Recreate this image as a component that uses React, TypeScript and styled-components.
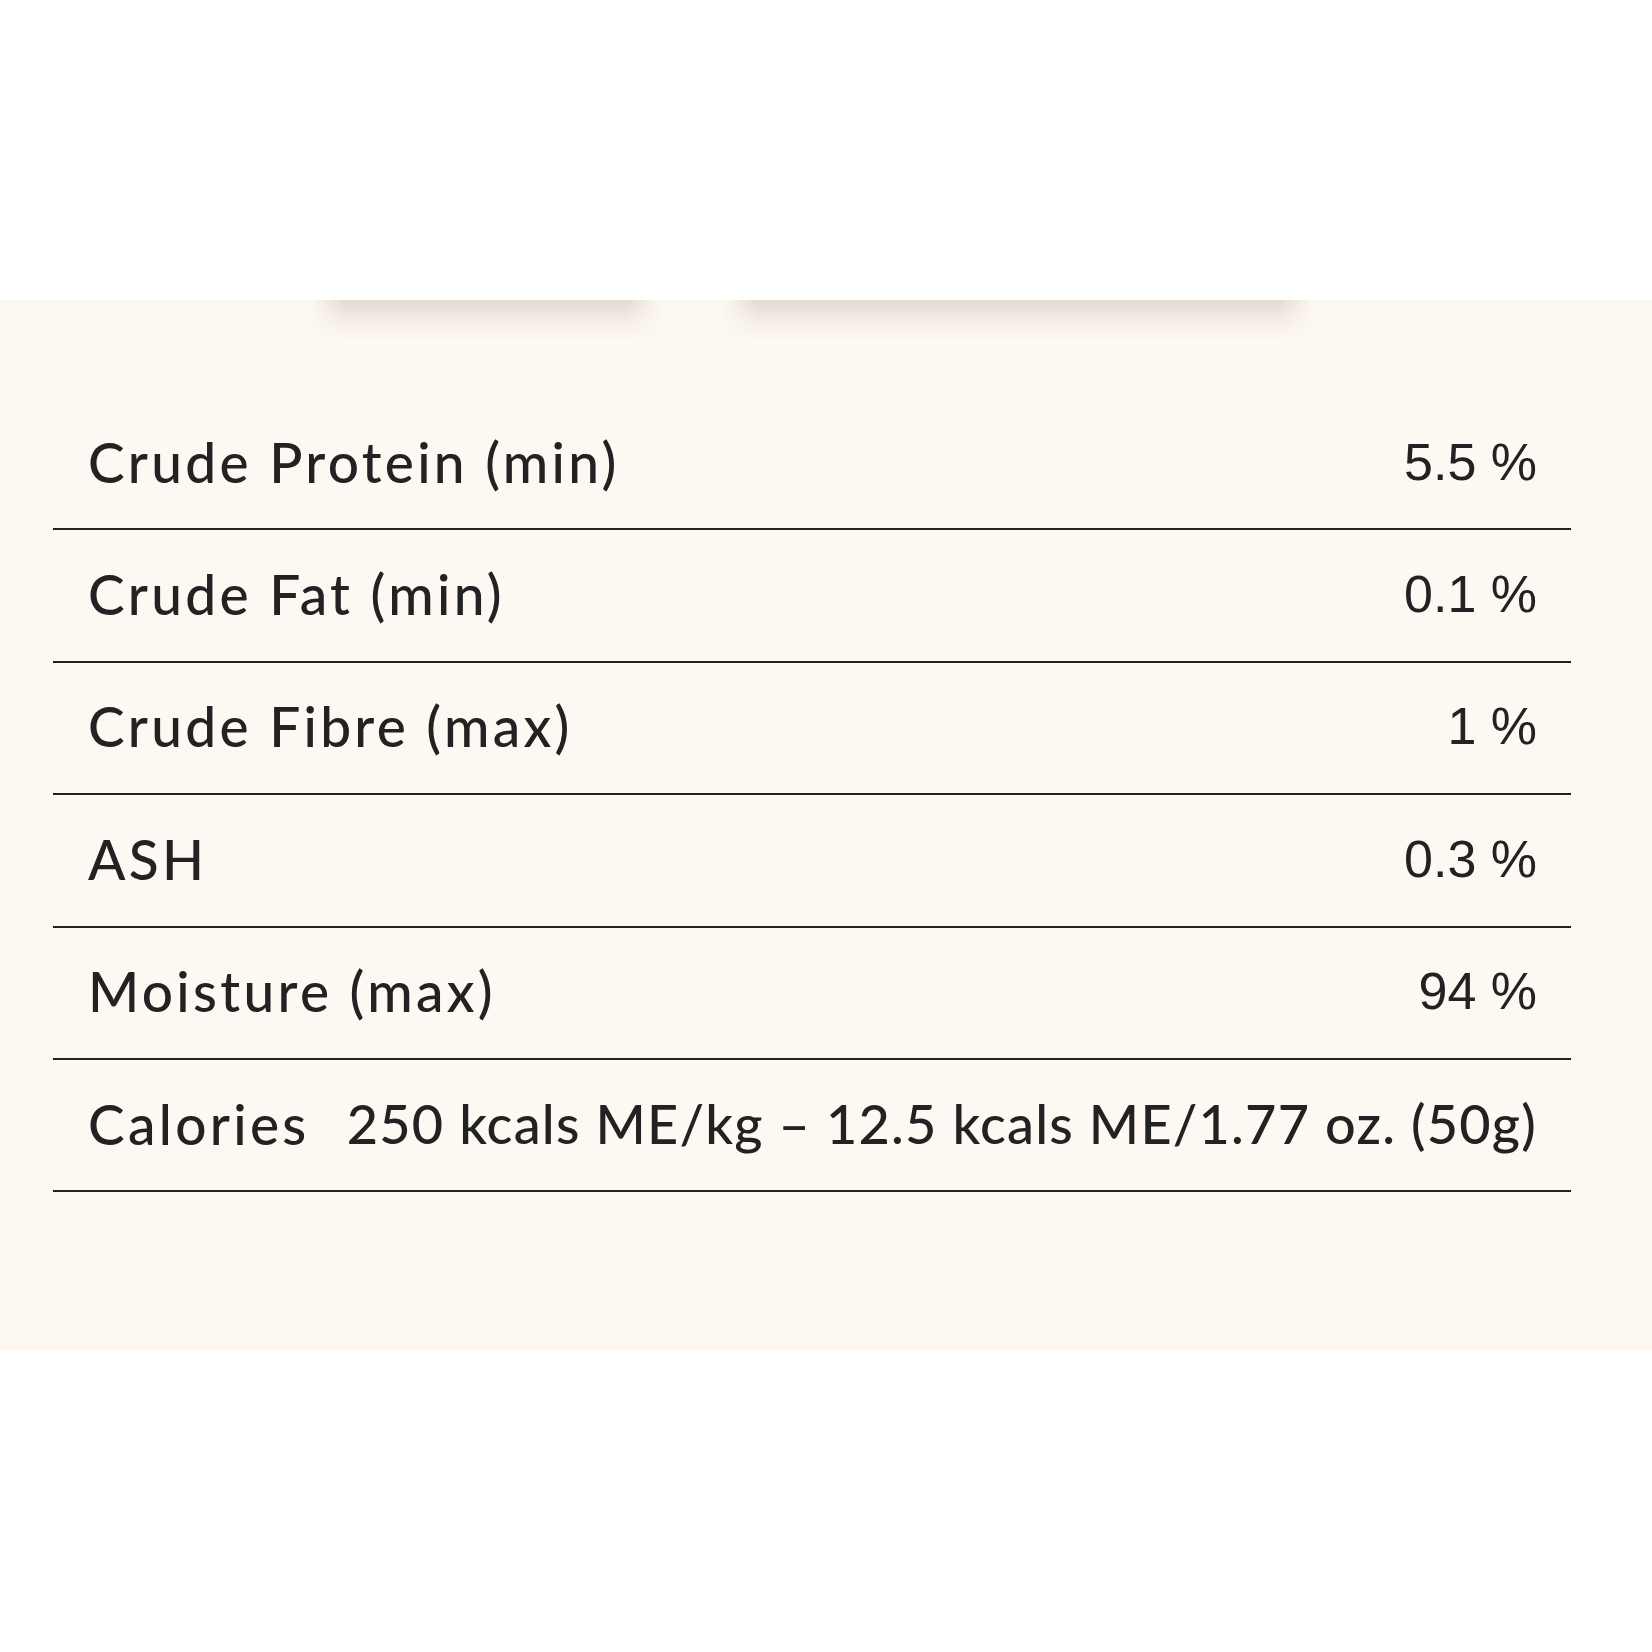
import React from "react";
import styled, { createGlobalStyle } from "styled-components";

const Global = createGlobalStyle`
  html, body { margin: 0; padding: 0; background: #ffffff; }
  body { font-family: "Lato", "Liberation Sans", sans-serif; color: #222222; }
`;

const Page = styled.div`
  width: 1652px;
  min-height: 1652px;
  background: #ffffff;
`;

const Header = styled.header`
  height: 300px;
  display: flex;
  align-items: flex-end;
  padding: 0 81px 0 53px;
  box-sizing: border-box;
`;

const Tabs = styled.nav`
  position: relative;
  z-index: 1;
  width: 100%;
  display: flex;
  justify-content: center;
  gap: 60px;
`;

const Tab = styled.div<{ $w: number }>`
  position: relative;
  width: ${(p) => p.$w}px;
  height: 90px;
  background: #ffffff;

  &::after {
    content: "";
    position: absolute;
    left: 0;
    right: 0;
    top: 100%;
    height: 42px;
    background: linear-gradient(
      to bottom,
      rgba(60, 45, 20, 0.14) 0%,
      rgba(60, 45, 20, 0.1) 22%,
      rgba(60, 45, 20, 0.05) 50%,
      rgba(60, 45, 20, 0.018) 78%,
      rgba(60, 45, 20, 0) 100%
    );
    -webkit-mask-image: linear-gradient(
      to right,
      transparent 0,
      #000 36px,
      #000 calc(100% - 36px),
      transparent 100%
    );
    mask-image: linear-gradient(
      to right,
      transparent 0,
      #000 36px,
      #000 calc(100% - 36px),
      transparent 100%
    );
  }
`;

const Section = styled.section`
  background: #fdf8f1;
  height: 1051px;
  padding: 98px 81px 0 53px;
  box-sizing: border-box;
`;

const Table = styled.div`
  display: flex;
  flex-direction: column;
`;

const Row = styled.div`
  height: 132.4px;
  box-sizing: border-box;
  border-bottom: 2px solid #222222;
  display: flex;
  align-items: center;
  justify-content: space-between;
  padding: 0 34px 3px 35px;
  gap: 32px;
`;

const Label = styled.span`
  font-family: "Lato", "Liberation Sans", sans-serif;
  font-size: 55px;
  font-weight: 500;
  letter-spacing: 3.3px;
  color: #222222;
  white-space: nowrap;
`;

const Value = styled.span<{ $plain?: boolean }>`
  font-family: ${(p) =>
    p.$plain ? '"Liberation Sans", Arial, sans-serif' : '"Lato", "Liberation Sans", sans-serif'};
  font-size: ${(p) => (p.$plain ? "52px" : "54px")};
  font-weight: ${(p) => (p.$plain ? 400 : 500)};
  letter-spacing: ${(p) => (p.$plain ? "0" : "1.22px")};
  color: #222222;
  white-space: nowrap;
`;

const rows: { label: string; value: string; plain: boolean }[] = [
  { label: "Crude Protein (min)", value: "5.5 %", plain: true },
  { label: "Crude Fat (min)", value: "0.1 %", plain: true },
  { label: "Crude Fibre (max)", value: "1 %", plain: true },
  { label: "ASH", value: "0.3 %", plain: true },
  { label: "Moisture (max)", value: "94 %", plain: true },
  {
    label: "Calories",
    value: "250 kcals ME/kg – 12.5 kcals ME/1.77 oz. (50g)",
    plain: false,
  },
];

export default function App() {
  return (
    <Page>
      <Global />
      <Header>
        <Tabs>
          <Tab $w={352} />
          <Tab $w={592} />
        </Tabs>
      </Header>
      <Section>
        <Table>
          {rows.map((r) => (
            <Row key={r.label}>
              <Label>{r.label}</Label>
              <Value $plain={r.plain}>{r.value}</Value>
            </Row>
          ))}
        </Table>
      </Section>
    </Page>
  );
}
